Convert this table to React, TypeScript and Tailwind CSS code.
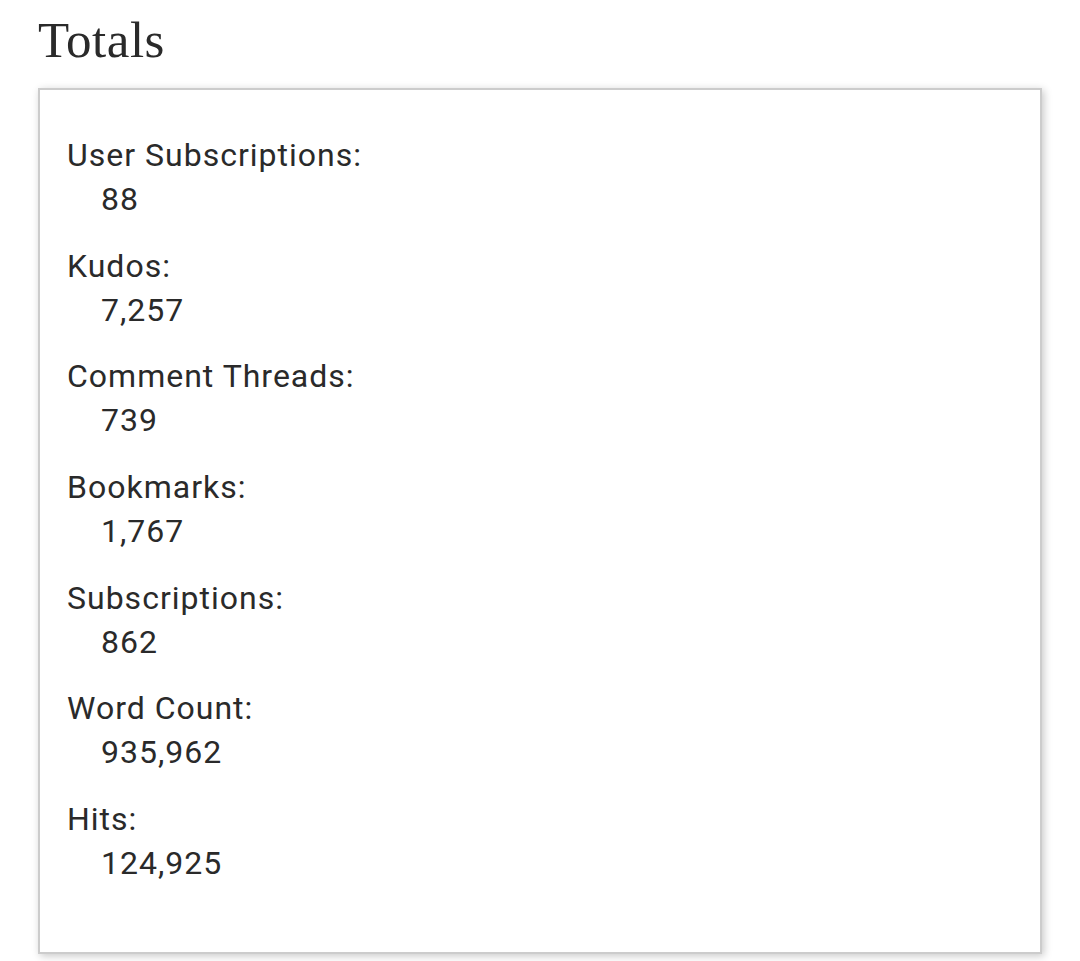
import React from "react";

const items: [string, string][] = [
  ["User Subscriptions:", "88"],
  ["Kudos:", "7,257"],
  ["Comment Threads:", "739"],
  ["Bookmarks:", "1,767"],
  ["Subscriptions:", "862"],
  ["Word Count:", "935,962"],
  ["Hits:", "124,925"],
];

export default function App() {
  return (
    <div className="w-[1080px] h-[961px] bg-white px-[38px] overflow-hidden text-[#2a2a2a]">
      <h2 className="font-['Liberation_Serif',serif] text-[51px] tracking-[0.5px] leading-[80px] h-[88px] pt-0">
        Totals
      </h2>
      <div className="border-2 border-[#cccccc] bg-white shadow-[2px_2px_8px_rgba(0,0,0,0.22)] pl-[27px] pt-[43px] pb-[44px] font-['Roboto',sans-serif] text-[32px] tracking-[1px] leading-[44px]">
        <dl>
          {items.map(([k, v]) => (
            <div key={k} className="mb-[22.67px]">
              <dt>{k}</dt>
              <dd className="ml-[34px]">{v}</dd>
            </div>
          ))}
        </dl>
      </div>
    </div>
  );
}
